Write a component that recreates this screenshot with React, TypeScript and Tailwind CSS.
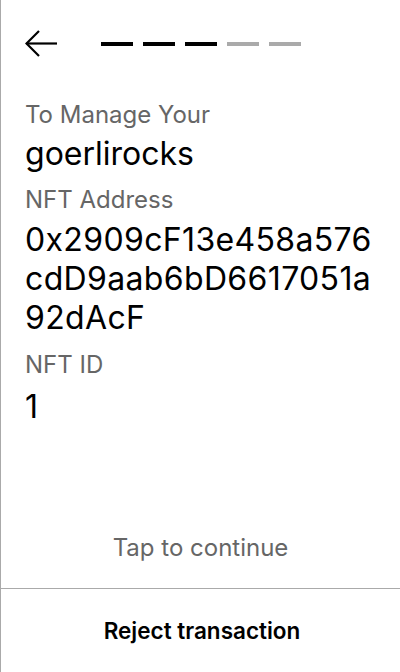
export default function App() {
  const steps = [true, true, true, false, false];

  return (
    <div
      className="flex h-[672px] w-[400px] flex-col border-l border-[#aaaaaa] bg-white text-black"
      style={{ fontFamily: "Inter, 'Noto Sans', sans-serif" }}
    >
      <header className="flex items-center pl-[24px] pt-[30px]">
        <svg width="33" height="28" viewBox="0 0 33 28" fill="none" stroke="black" strokeWidth="2.2">
          <path d="M1.5 13.5H32" />
          <path d="M14 1L1.5 13.5L14 26" />
        </svg>
        <div className="ml-[43px] flex gap-[10px]">
          {steps.map((done, i) => (
            <span
              key={i}
              className={`h-[4px] w-[32px] ${done ? "bg-black" : "bg-[#aaaaaa]"}`}
            />
          ))}
        </div>
      </header>

      <main className="flex flex-1 flex-col px-[24px] pt-[43px]">
        <p className="text-[24px] leading-[28px] text-[#666666]">To Manage Your</p>
        <p className="mt-[5px] text-[32px] leading-[39px]">goerlirocks</p>
        <p className="mt-[13px] text-[24px] leading-[28px] text-[#666666]">NFT Address</p>
        <p className="mt-[6px] break-all text-[32px] leading-[39px] tracking-[0.35px]">
          0x2909cF13e458a576cdD9aab6bD6617051a92dAcF
        </p>
        <p className="mt-[14px] text-[24px] leading-[28px] text-[#666666]">NFT ID</p>
        <p className="mt-[8px] text-[32px] leading-[39px]">1</p>

        <p className="mt-auto pb-[26px] text-center text-[24px] leading-[28px] text-[#666666]">
          Tap to continue
        </p>
      </main>

      <button
        type="button"
        className="h-[84px] w-full border-t border-[#aaaaaa] pl-[3px] text-center text-[22.5px] font-semibold"
      >
        Reject transaction
      </button>
    </div>
  );
}
